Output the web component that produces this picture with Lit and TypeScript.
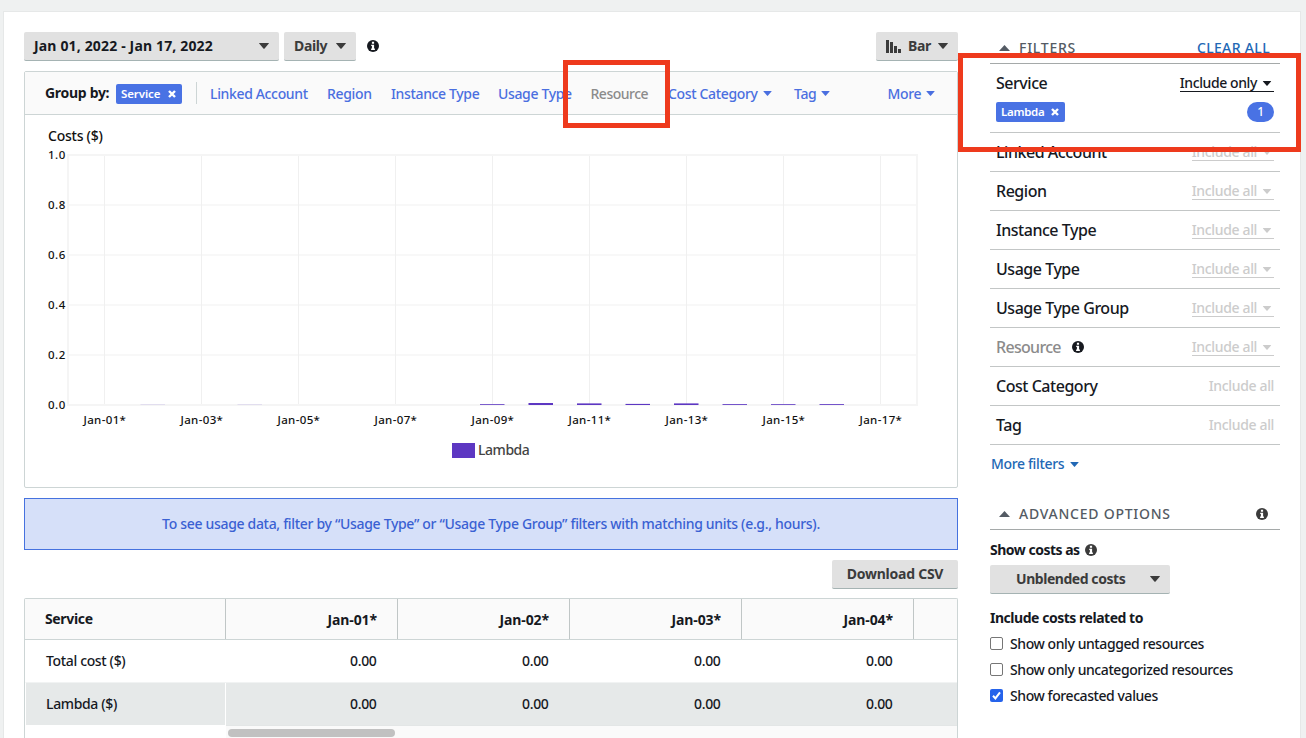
import { LitElement, html, css, svg } from "lit";
import { customElement, property } from "lit/decorators.js";
import { classMap } from "lit/directives/class-map.js";

const caret = (cls = "caret") => html`<svg class=${cls} viewBox="0 0 10 6"><path d="M0.4 0h9.2q.6 0 .2.6L5.6 5.5q-.6.7-1.2 0L.2.6Q-.2 0 .4 0z"/></svg>`;
const info = (cls = "") => html`<svg class="info ${cls}" viewBox="0 0 12 12"><circle cx="6" cy="6" r="6"/><path class="i" d="M4.9 1.8h2.2v1.9H4.9zM4.2 4.7h2.9v3.9h.8v1.3H4.1V8.6h.8V6h-.7z"/></svg>`;
const cross = html`<svg class="cross" viewBox="0 0 8 8"><path d="M1 1l6 6M7 1l-6 6"/></svg>`;

@customElement("cost-chart")
export class CostChart extends LitElement {
  static styles = css`
    :host { display: block; }
    svg { display: block; }
    text { font-family: "Noto Sans", "Open Sans", sans-serif; font-size: 11.5px; font-weight: 500; fill: #111; }
    .title { font-size: 14px; }
    .legend { font-size: 14px; fill: #444; }
    .grid { stroke: #f0f0f0; stroke-width: 1; }
    .level { stroke: #f8f8f8; stroke-width: 2; }
    .frame { fill: none; stroke: #f5f5f5; stroke-width: 2; }
    .bar { fill: #5d37c2; }
  `;
  bars = [
    [1, 1, 0.12], [3, 1, 0.12], [8, 1, 0.8], [9, 2, 1], [10, 1.6, 1], [11, 1.1, 1],
    [12, 1.6, 1], [13, 1, 0.85], [14, 1, 0.8], [15, 1, 0.85],
  ];
  render() {
    const ys = [0, 1, 2, 3, 4, 5];
    const xs = [0, 1, 2, 3, 4, 5, 6, 7, 8];
    return html`<svg width="932" height="372" viewBox="25 115 932 372">
      <text class="title" x="48" y="141" textLength="54.5">Costs ($)</text>
      ${ys.map((i) => svg`
        <line class="level" x1="68" x2="917" y1=${155 + i * 50} y2=${155 + i * 50}></line>
        <text x="48" y=${159 + i * 50} textLength="17">${(1 - i * 0.2).toFixed(1)}</text>`)}
      ${xs.map((i) => svg`
        <line class="grid" x1=${104.5 + i * 97} x2=${104.5 + i * 97} y1="155" y2="405"></line>
        <text x=${83.5 + i * 97} y="424" textLength="42">Jan-${String(i * 2 + 1).padStart(2, "0")}*</text>`)}
      <rect class="frame" x="68" y="155" width="849" height="250"></rect>
      ${this.bars.map(([d, h, o]) => svg`<rect class="bar" x=${92 + d * 48.5} y=${405 - h} width="24.5" height=${h} opacity=${o}></rect>`)}
      <rect class="bar" x="452" y="443" width="23" height="15"></rect>
      <text class="legend" x="478" y="455" textLength="51.5">Lambda</text>
    </svg>`;
  }
}

interface Filter { name: string; mode: string; caret: boolean; muted?: boolean; }

@customElement("app-root")
export class AppRoot extends LitElement {
  @property({ attribute: false }) filters: Filter[] = [
    { name: "Linked Account", mode: "Include all", caret: true },
    { name: "Region", mode: "Include all", caret: true },
    { name: "Instance Type", mode: "Include all", caret: true },
    { name: "Usage Type", mode: "Include all", caret: true },
    { name: "Usage Type Group", mode: "Include all", caret: true },
    { name: "Resource", mode: "Include all", caret: true, muted: true },
    { name: "Cost Category", mode: "Include all", caret: false },
    { name: "Tag", mode: "Include all", caret: false },
  ];

  static styles = css`
    :host { display: block; position: relative; width: 1306px; height: 738px; overflow: hidden; box-sizing: border-box;
      padding: 11px 5px 0 3px; background: #eff1f1; color: #16191f;
      font: 500 14px/20px "Noto Sans", "Open Sans", sans-serif; letter-spacing: -0.35px; }
    * { box-sizing: border-box; }
    svg { display: block; flex: none; fill: currentColor; }
    .panel { display: flex; height: 740px; background: #fff; border: 1px solid #e6e8e8; padding: 20px 0 0 20px; }
    .main { width: 934px; margin-right: 32px; flex: none; }
    .side { width: 290px; flex: none; }
    .toolbar { display: flex; height: 29px; align-items: stretch; gap: 5px; margin-bottom: 10px; }
    .btn { display: flex; align-items: center; height: 29px; background: #e1e1e1; border-bottom: 1px solid #a5b3b3;
      border-radius: 2px; font-weight: 700; color: #3b3b3b; padding: 0 10px; justify-content: space-between; white-space: nowrap; }
    .date { width: 255px; color: #16191f; letter-spacing: 0.16px; }
    .daily { width: 72px; }
    .type { width: 82px; margin-left: auto; }
    .caret { width: 10px; height: 6px; color: #3b3b3b; }
    .toolbar .info { align-self: center; margin: -1px 0 0 6px; }
    .info { width: 12px; height: 12px; color: #16191f; }
    .info.grey { color: #3b3b3b; }
    .i { fill: #fff; }
    .bars { width: 15px; height: 13px; }
    .chartbox { height: 417px; border: 1px solid #cdd5d5; border-radius: 2px; margin-bottom: 10px; }
    .groups { display: flex; align-items: center; height: 43px; background: #fafafa; border-bottom: 1px solid #cdd5d5; padding: 0 20px; color: #4a6fe0; }
    .label { width: 71px; font-weight: 700; color: #16191f; flex: none; letter-spacing: -0.3px; }
    .chip { display: flex; align-items: center; justify-content: space-between; height: 20px; background: #4972e4; color: #fff;
      border-radius: 2px; padding: 0 6px 0 5px; font-size: 11.5px; font-weight: 600; letter-spacing: -0.1px; flex: none; }
    .chip.service { width: 66px; margin-top: 2px; }
    .chip.lambda { width: 69px; font-size: 11.5px; letter-spacing: -0.3px; }
    .cross { width: 8px; height: 8px; stroke: #fff; stroke-width: 2.4; fill: none; }
    .divider { width: 1px; height: 22px; background: #cdd5d5; margin: 0 13px 0 14px; flex: none; }
    .links { display: grid; grid-template-columns: 117px 64px 107px 92.5px 77.5px 126px 93.5px 60px; white-space: nowrap; padding-top: 1px; }
    .link { display: flex; align-items: center; gap: 5px; }
    .link.off { color: #8b8b8b; letter-spacing: -0.5px; }
    .link .caret { width: 9px; height: 5px; color: #4a6fe0; }
    .banner { display: flex; align-items: center; justify-content: center; height: 52px; background: #d6e0f9; border: 1px solid #4672df;
      color: #3a61d3; margin-bottom: 10px; letter-spacing: -0.315px; }
    .csv { width: 126px; margin: 0 0 9px auto; justify-content: center; letter-spacing: -0.25px; }
    .table { height: 160px; border: 1px solid #cdd5d5; border-bottom: 0; border-radius: 2px 2px 0 0; overflow: hidden; }
    .row { display: grid; grid-template-columns: 201px repeat(4, 172px) 43px; height: 43px; align-items: stretch; }
    .row.head { height: 41px; background: #fafafa; border-bottom: 1px solid #cdd5d5; font-weight: 700; letter-spacing: -0.1px; }
    .row.plain { height: 42px; }
    .cell { display: flex; align-items: center; justify-content: flex-end; padding-right: 21.5px; }
    .cell:first-child { justify-content: flex-start; padding-left: 21px; }
    .head .cell { border-right: 1px solid #c0c6c6; padding: 2px 20px 0 0; }
    .head .cell:first-child { padding: 0 0 0 20px; letter-spacing: -0.35px; }
    .head .cell:last-child { border: 0; }
    .row.shade { background: #e6e9e9; border-top: 1px solid #f1f3f3; border-left: 1px solid #fff; }
    .row.shade .cell { padding-right: 22.5px; }
    .row.shade .cell:first-child { border-right: 1px solid #fff; padding-left: 20px; margin-right: 1px; }
    .scroll { margin-left: 201px; height: 20px; background: #fafafa; border-top: 1px solid #e3e6e6; padding: 3px 0 0 2px; }
    .thumb { width: 167px; height: 8px; border-radius: 4px; background: #c1c1c1; }
    .sidehead { display: flex; align-items: center; height: 32px; border-bottom: 1px solid #a5a9a9; padding: 0 10px 0 9px;
      color: #545b64; letter-spacing: 0.75px; }
    .up { width: 11px; height: 6px; margin-right: 9px; }
    .sidehead .info { margin: 0 2px 0 auto; }
    .clear { margin-left: auto; color: #2268b5; letter-spacing: 0.35px; }
    .filter { display: flex; justify-content: space-between; height: 39px; border-bottom: 1px solid #c3c6c6; padding: 9px 6px 0 6px; }
    .fname { display: flex; align-items: center; gap: 11px; font-size: 16px; height: 20px; letter-spacing: -0.47px; white-space: nowrap; }
    .muted { color: #8b8b8b; letter-spacing: -0.7px; }
    .mode { display: flex; align-items: center; gap: 5px; height: 19px; color: #ccc; border-bottom: 1px solid transparent; padding-top: 2px; white-space: nowrap; }
    .mode.line { border-color: #ccc; padding-right: 2px; }
    .mode .caret { width: 10px; height: 5px; color: inherit; }
    .first { height: 69px; border-bottom: 1px solid #c3c6c6; padding: 9px 6px 0 6px; }
    .pair { display: flex; justify-content: space-between; height: 29px; }
    .mode.on { color: #16191f; border-color: #16191f; padding-right: 2px; letter-spacing: -0.4px; }
    .count { width: 27px; height: 20px; border-radius: 10px; background: #4972e4; color: #fff; font-size: 12px; text-align: center; }
    .more { display: flex; align-items: center; gap: 6px; height: 38px; padding-left: 1px; color: #2268b5; }
    .more .caret { width: 9px; height: 5px; color: #2268b5; }
    .adv { margin-top: 15px; }
    .costs { display: flex; align-items: center; gap: 5px; font-weight: 700; height: 20px; margin: 10px 0 5px; letter-spacing: -0.5px; }
    .unblended { width: 180px; padding-left: 26px; margin-bottom: 14px; letter-spacing: -0.45px; }
    .bold { font-weight: 700; height: 20px; margin-bottom: 3px; letter-spacing: -0.47px; }
    .check { display: flex; align-items: center; gap: 7px; height: 26px; white-space: nowrap; letter-spacing: -0.42px; }
    .box { width: 13px; height: 13px; border: 1px solid #767676; border-radius: 2px; background: #fff; margin-top: -1px; }
    .box.checked { background: #2563eb; border: 0; }
    .tick { width: 13px; height: 13px; fill: none; stroke: #fff; stroke-width: 2; }
    .mark { position: absolute; border: 5px solid #ee3a1d; }
    .mark.a { left: 563px; top: 60px; width: 107px; height: 68px; }
    .mark.b { left: 958px; top: 53px; width: 343px; height: 99px; }
  `;

  render() {
    return html`
      <div class="panel">
        <div class="main">
          <div class="toolbar">
            <div class="btn date"><span>Jan 01, 2022 - Jan 17, 2022</span>${caret()}</div>
            <div class="btn daily"><span>Daily</span>${caret()}</div>
            ${info()}
            <div class="btn type"><svg class="bars" viewBox="0 0 15 13"><path d="M0 0h3v13H0zM4 2h3v11H4zM8 6h3v7H8zM12 9h3v4h-3z"/></svg><span>Bar</span>${caret()}</div>
          </div>
          <div class="chartbox">
            <div class="groups">
              <span class="label">Group by:</span>
              <span class="chip service"><span>Service</span>${cross}</span>
              <span class="divider"></span>
              <div class="links">
                <span class="link">Linked Account</span><span class="link">Region</span>
                <span class="link">Instance Type</span><span class="link">Usage Type</span>
                <span class="link off">Resource</span>
                <span class="link">Cost Category ${caret()}</span>
                <span class="link">Tag ${caret()}</span><span class="link">More ${caret()}</span>
              </div>
            </div>
            <cost-chart></cost-chart>
          </div>
          <div class="banner"><span>To see usage data, filter by “Usage Type” or “Usage Type Group” filters with matching units (e.g., hours).</span></div>
          <div class="btn csv">Download CSV</div>
          <div class="table">
            <div class="row head"><span class="cell">Service</span>${[1, 2, 3, 4].map((d) => html`<span class="cell">Jan-0${d}*</span>`)}<span class="cell"></span></div>
            ${["Total cost ($)", "Lambda ($)"].map((n, i) => html`
              <div class=${classMap({ row: true, plain: i === 0, shade: i === 1 })}><span class="cell">${n}</span>${[1, 2, 3, 4].map(() => html`<span class="cell">0.00</span>`)}</div>`)}
            <div class="scroll"><div class="thumb"></div></div>
          </div>
        </div>
        <div class="side">
          <div class="sidehead"><svg class="up" viewBox="0 0 11 6"><path d="M5.5 0L11 6H0z"/></svg><span>FILTERS</span><span class="clear">CLEAR ALL</span></div>
          <div class="first">
            <div class="pair"><span class="fname">Service</span><span class="mode on"><span>Include only</span>${caret()}</span></div>
            <div class="pair"><span class="chip lambda"><span>Lambda</span>${cross}</span><span class="count">1</span></div>
          </div>
          ${this.filters.map((f) => html`
            <div class="filter">
              <span class=${classMap({ fname: true, muted: !!f.muted })}>${f.name}${f.muted ? info() : ""}</span>
              <span class=${classMap({ mode: true, line: f.caret })}><span>${f.mode}</span>${f.caret ? caret() : ""}</span>
            </div>`)}
          <div class="more"><span>More filters</span>${caret()}</div>
          <div class="sidehead adv"><svg class="up" viewBox="0 0 11 6"><path d="M5.5 0L11 6H0z"/></svg><span>ADVANCED OPTIONS</span>${info("grey")}</div>
          <div class="costs"><span>Show costs as</span>${info("grey")}</div>
          <div class="btn unblended"><span>Unblended costs</span>${caret()}</div>
          <div class="bold">Include costs related to</div>
          <div class="check"><span class="box"></span><span>Show only untagged resources</span></div>
          <div class="check"><span class="box"></span><span>Show only uncategorized resources</span></div>
          <div class="check"><span class="box checked"><svg class="tick" viewBox="0 0 13 13"><path d="M3 6.8l2.4 2.6L10 3.4"/></svg></span><span>Show forecasted values</span></div>
        </div>
      </div>
      <div class="mark a"></div>
      <div class="mark b"></div>
    `;
  }
}
